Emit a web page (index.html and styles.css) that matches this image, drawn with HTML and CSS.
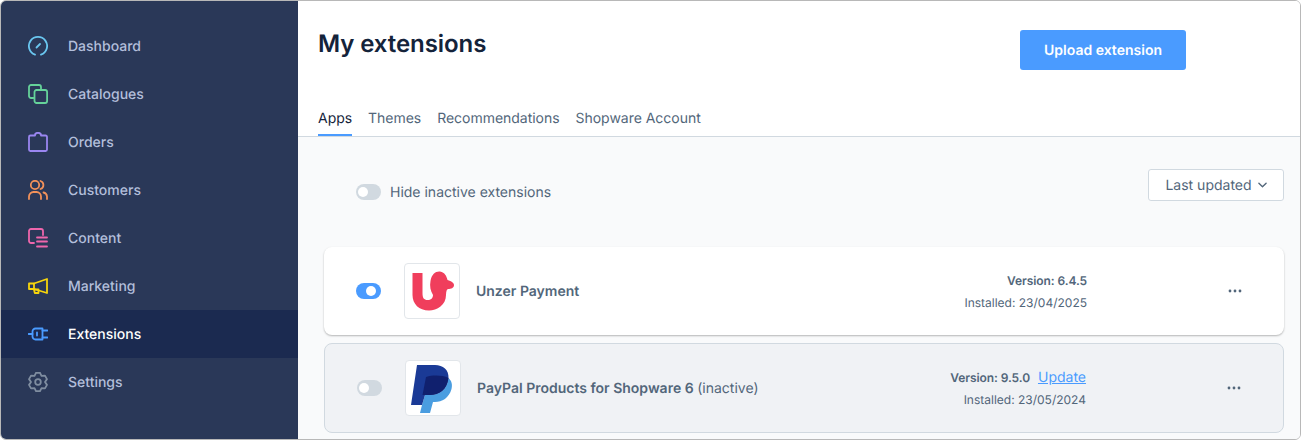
FILE: index.html
```html
<!DOCTYPE html>
<html lang="en">
<head>
<meta charset="utf-8">
<title>My extensions</title>
<link rel="stylesheet" href="styles.css">
</head>
<body>
<div class="window">
  <nav class="sidebar">
    <a class="nav-item"><svg class="nav-icon ic-dash" viewBox="0 0 20 20"><path d="M7 18.6A9.1 9.1 0 1 1 13 18.6"/><path d="M8.5 11.5 12 8"/></svg><span>Dashboard</span></a>
    <a class="nav-item"><svg class="nav-icon ic-cat" viewBox="0 0 20 20"><path d="M5.5 14H3a2 2 0 0 1-2-2V3a2 2 0 0 1 2-2h8a2 2 0 0 1 2 2v2.5"/><rect x="6.5" y="6" width="12.6" height="13" rx="2"/></svg><span>Catalogues</span></a>
    <a class="nav-item"><svg class="nav-icon ic-ord" viewBox="0 0 20 20"><path d="M7 3.5H2.4a1.4 1.4 0 0 0-1.4 1.4V17.6A1.4 1.4 0 0 0 2.4 19H17.6A1.4 1.4 0 0 0 19 17.6V4.9A1.4 1.4 0 0 0 17.6 3.5H13V3.2A3 2.4 0 0 0 7 3.2Z"/></svg><span>Orders</span></a>
    <a class="nav-item"><svg class="nav-icon ic-cus" viewBox="0 0 20 20"><circle cx="7" cy="5" r="4.2"/><path d="M1 19V16.5A4.5 4.5 0 0 1 5.5 12H8.5A4.5 4.5 0 0 1 13 16.5V19"/><path d="M12.5 1a4.2 4.2 0 0 1 0 8"/><path d="M15.5 12.5A4.5 4.5 0 0 1 19 16.5V19"/></svg><span>Customers</span></a>
    <a class="nav-item"><svg class="nav-icon ic-con" viewBox="0 0 20 20"><path d="M6 15H3a2 2 0 0 1-2-2V3a2 2 0 0 1 2-2H13a2 2 0 0 1 2 2V7"/><path d="M9 9.5H19M9 13.5H19M9 18.5H19"/></svg><span>Content</span></a>
    <a class="nav-item"><svg class="nav-icon ic-mar" viewBox="0 0 20 20"><path d="M1 7.5H6V13H1Z"/><path d="M6 7.5 19 3V17L6 13"/><path d="M6 13.5H10.5V17H6.8Z"/></svg><span>Marketing</span></a>
    <a class="nav-item active"><svg class="nav-icon ic-ext" viewBox="0 0 20 20"><path d="M7.5 4.5H14.5V15.5H7.5A3 3 0 0 1 4.5 12.5V7.5A3 3 0 0 1 7.5 4.5Z"/><path d="M.5 10H4.5M14.5 6.5H19.5M14.5 13.5H19.5M9 8.5V11.5"/></svg><span>Extensions</span></a>
    <a class="nav-item"><svg class="nav-icon ic-set" viewBox="0 0 20 20"><path d="M8 .8H12L13.5 3.94 16.97 3.67 18.97 7.13 17 10 18.97 12.87 16.97 16.33 13.5 16.06 12 19.2H8L6.5 16.06 3.03 16.33 1.03 12.87 3 10 1.03 7.13 3.03 3.67 6.5 3.94Z"/><circle cx="10" cy="10" r="2.8"/></svg><span>Settings</span></a>
  </nav>
  <main class="main">
    <header class="header">
      <div class="head-row">
        <h1 class="title">My extensions</h1>
        <button class="upload">Upload extension</button>
      </div>
      <div class="tabs">
        <a class="tab current">Apps</a>
        <a class="tab">Themes</a>
        <a class="tab">Recommendations</a>
        <a class="tab">Shopware Account</a>
      </div>
    </header>
    <section class="content">
      <div class="filter-row">
        <label class="hide-inactive"><span class="toggle"></span><span>Hide inactive extensions</span></label>
        <button class="sort">Last updated<svg class="chev" viewBox="0 0 10 6"><path d="M1 1 5 5 9 1"/></svg></button>
      </div>
      <article class="card">
        <span class="toggle on"></span>
        <div class="logo"><svg viewBox="1 1 54 54" width="54" height="54"><path class="unzer-fill" d="M8.5 10H18.5V30C18.5 35 20 37 23.5 37 27 37 29 35 29 32 26.5 28 25.5 23 26.5 18 27.5 11 32 8 36 8.5 41 9.5 42.5 13 43.5 17 47.5 18 50 20 50 22 50 25 47 26 44 26 43 26 42 28 42 32 42 42 33 47.5 25 47.5 15 47.5 8.5 41 8.5 32Z"/></svg></div>
        <div class="name">Unzer Payment</div>
        <div class="meta">
          <div class="version">Version: 6.4.5</div>
          <div class="installed">Installed: 23/04/2025</div>
        </div>
        <svg class="dots" viewBox="0 0 14 4"><circle cx="2" cy="2" r="1.4"/><circle cx="7" cy="2" r="1.4"/><circle cx="12" cy="2" r="1.4"/></svg>
      </article>
      <article class="card inactive">
        <span class="toggle"></span>
        <div class="logo"><svg viewBox="1 1 54 54" width="54" height="54"><path class="pp-light" d="M43.5 18C47 21 47.5 25 46.5 29 44 38 37 42 30 42H28L25 53H15L17 45 20 35H25C34 35 42 30 43.5 18Z"/><path class="pp-dark" d="M12 5H30C38 5 44 10 43.5 18 42 30 34 35 25 35H20L17 45H6Z"/><path class="pp-deep" d="M21 17C28 15 37 15 43.5 18 42 30 34 35 25 35H17.5Z"/></svg></div>
        <div class="name">PayPal Products for Shopware 6 <span class="state">(inactive)</span></div>
        <div class="meta">
          <div class="version">Version: 9.5.0<a class="update">Update</a></div>
          <div class="installed">Installed: 23/05/2024</div>
        </div>
        <svg class="dots" viewBox="0 0 14 4"><circle cx="2" cy="2" r="1.4"/><circle cx="7" cy="2" r="1.4"/><circle cx="12" cy="2" r="1.4"/></svg>
      </article>
    </section>
  </main>
</div>
</body>
</html>
```

FILE: styles.css
```css
* { box-sizing: border-box; }
html, body { margin: 0; padding: 0; background: #fff; }
body { font-family: Inter, "Liberation Sans", sans-serif; font-size: 14px; color: #52667a; text-rendering: geometricPrecision; }

.window {
  display: flex;
  width: 1301px;
  height: 440px;
  border: 1px solid #b8b8b8;
  border-radius: 6px;
  overflow: hidden;
}

.sidebar { flex: 0 0 297px; padding-top: 21px; background: #2a3858; }
.nav-item { display: flex; align-items: center; gap: 20px; height: 48px; padding-left: 27px; color: #b3bfdb; font-weight: 500; }
.nav-item.active { background: #1b2a50; color: #fff; }
.nav-icon { width: 20px; height: 20px; fill: none; stroke-width: 1.8; stroke-linecap: round; stroke-linejoin: round; }
.ic-dash { stroke: #6ac7f0; }
.ic-cat { stroke: #65d29a; }
.ic-ord { stroke: #9a86f0; }
.ic-cus { stroke: #f2915a; }
.ic-con { stroke: #ee66ac; }
.ic-mar { stroke: #f7d50c; }
.ic-ext { stroke: #4a9bff; }
.ic-set { stroke: #7f8da0; }

.main { flex: 1; display: flex; flex-direction: column; min-width: 0; background: #f9fafb; }
.header { height: 136px; background: #fff; border-bottom: 1px solid #d1d9e0; padding: 29px 114px 0 20px; display: flex; flex-direction: column; justify-content: space-between; }
.head-row { display: flex; justify-content: space-between; align-items: flex-start; }
.title { margin: 0; font-size: 24px; line-height: 28px; font-weight: 600; letter-spacing: -.08px; color: #14233a; }
.upload { width: 166px; height: 40px; padding: 0; border: 0; border-radius: 3px; background: #4a9bff; color: #fff; font: 600 14px Inter, "Liberation Sans", sans-serif; text-rendering: geometricPrecision; }
.tabs { display: flex; gap: 16px; }
.tab { height: 36px; padding-top: 8px; line-height: 22px; letter-spacing: -.03px; color: #52667a; }
.tab.current { color: #14233a; border-bottom: 2px solid #4a9bff; }

.content { flex: 1; padding: 32px 16px 0 26px; }
.filter-row { display: flex; justify-content: space-between; align-items: center; height: 32px; margin-bottom: 46px; }
.hide-inactive { display: flex; align-items: center; gap: 9px; padding: 14px 0 0 32px; }
.sort { display: flex; align-items: center; justify-content: center; gap: 6px; width: 136px; height: 32px; padding: 0; border: 1px solid #d1d9e0; border-radius: 3px; background: #fff; color: #52667a; font: 400 14px Inter, "Liberation Sans", sans-serif; text-rendering: geometricPrecision; }
.chev { width: 9px; height: 6px; fill: none; stroke: #52667a; stroke-width: 1.5; stroke-linecap: round; stroke-linejoin: round; }

.toggle { position: relative; flex: 0 0 25px; width: 25px; height: 16px; border-radius: 8px; background: #d1d9e0; }
.toggle::after { content: ""; position: absolute; left: 2px; top: 3px; width: 10px; height: 10px; border-radius: 50%; background: #fff; }
.toggle.on { background: #4a9bff; }
.toggle.on::after { left: 10px; }

.card { display: flex; align-items: center; height: 88px; padding: 0 32px; border-radius: 8px; background: #fff; box-shadow: 0 1px 2px rgba(0, 0, 0, .28); }
.card.inactive { height: 90px; margin-top: 8px; border: 1px solid #d1d9e0; background: #f0f2f5; box-shadow: none; }
.logo { flex: 0 0 56px; width: 56px; height: 56px; margin-left: 23px; display: flex; align-items: center; justify-content: center; border: 1px solid #e2e6ea; border-radius: 4px; background: #fff; }
.logo svg { display: block; }
.name { flex: 1; margin-left: 16px; font-weight: 600; }
.state { font-weight: 400; }
.meta { padding-top: 1px; text-align: right; font-size: 12px; line-height: 22px; }
.version { font-weight: 600; letter-spacing: -.08px; }
.update { margin-left: 8px; font-size: 14px; font-weight: 400; letter-spacing: 0; color: #4a9bff; text-decoration: underline; }
.dots { flex: 0 0 14px; width: 14px; height: 4px; margin: 0 10px 0 141px; fill: #52667a; }

.unzer-fill { fill: #f03e5c; }
.pp-light { fill: #4a9de0; }
.pp-dark { fill: #1a3a96; }
.pp-deep { fill: #10206e; }
```
